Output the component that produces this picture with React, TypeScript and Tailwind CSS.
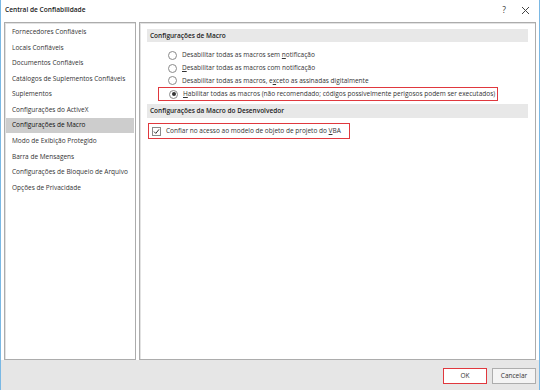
import React from "react";

const items = [
  "Fornecedores Confiáveis",
  "Locais Confiáveis",
  "Documentos Confiáveis",
  "Catálogos de Suplementos Confiáveis",
  "Suplementos",
  "Configurações do ActiveX",
  "Configurações de Macro",
  "Modo de Exibição Protegido",
  "Barra de Mensagens",
  "Configurações de Bloqueio de Arquivo",
  "Opções de Privacidade",
];

function Radio({ checked }: { checked?: boolean }) {
  return (
    <span className="w-[9px] h-[9px] rounded-full border border-[#8a8a8a] bg-white flex items-center justify-center shrink-0">
      {checked && <span className="w-[4px] h-[4px] rounded-full bg-[#333]" />}
    </span>
  );
}

export default function App() {
  return (
    <div
      className="w-[540px] h-[390px] bg-white border-l border-r border-[#7ab8e4] flex flex-col text-[#333] text-[6.5px] overflow-hidden whitespace-nowrap"
      style={{ fontFamily: '"Open Sans", "Noto Sans", sans-serif' }}
    >
      <div className="h-[20px] flex items-center justify-between pl-[4px] pr-[9px]">
        <span className="text-[6.6px] font-semibold text-[#222]">Central de Confiabilidade</span>
        <div className="flex items-center gap-[15px] text-[#333]">
          <span className="text-[8.5px]">?</span>
          <svg width="9" height="9" viewBox="0 0 9 9">
            <path d="M1 1L8 8M8 1L1 8" stroke="#444" strokeWidth="1" />
          </svg>
        </div>
      </div>
      <div className="flex gap-[3px] px-[3px] pt-[2px] h-[340px]">
        <div className="w-[132px] border border-[#acacac] shadow-[inset_1px_1px_0_#e2e2e2] bg-white py-[1px] px-[1px]">
          {items.map((t, i) => (
            <div
              key={t}
              className={
                "h-[15.6px] flex items-center pl-[6px] " +
                (i === 6 ? "bg-[#cdcdcd] text-[#111] font-medium" : "")
              }
            >
              {t}
            </div>
          ))}
        </div>
        <div className="flex-1 border border-[#acacac] shadow-[inset_1px_1px_0_#e2e2e2] bg-white pt-[6px] pl-[7px] pr-[7px]">
          <div className="h-[13px] bg-[#e8e8e8] flex items-center pl-[3px] font-semibold text-[#222]">
            Configurações de Macro
          </div>
          <div className="pl-[17px] pt-[7px] flex flex-col">
            <div className="h-[12.7px] flex items-center gap-[5px] pl-[4px]">
              <Radio />
              <span>
                Desabilitar todas as macros sem <span className="underline">n</span>otificação
              </span>
            </div>
            <div className="h-[12.7px] flex items-center gap-[5px] pl-[4px]">
              <Radio />
              <span>
                <span className="underline">D</span>esabilitar todas as macros com notificação
              </span>
            </div>
            <div className="h-[12.7px] flex items-center gap-[5px] pl-[4px]">
              <Radio />
              <span>
                Desabilitar todas as macros, e<span className="underline">x</span>ceto as assinadas digitalmente
              </span>
            </div>
            <div className="h-[14px] w-[340px] ml-[-6px] flex items-center gap-[5px] pl-[10px] border border-[#e0383e]">
              <Radio checked />
              <span>
                <span className="underline">H</span>abilitar todas as macros (não recomendado; códigos possivelmente perigosos podem ser executados)
              </span>
            </div>
          </div>
          <div className="mt-[3px] h-[14px] bg-[#e8e8e8] flex items-center pl-[3px] font-semibold text-[#222]">
            Configurações da Macro do Desenvolvedor
          </div>
          <div className="mt-[5px] ml-[1px] w-[202px] h-[16px] border border-[#e0383e] flex items-center pl-[3px] gap-[5px]">
            <span className="w-[9px] h-[9px] border border-[#8a8a8a] bg-white flex items-center justify-center">
              <svg width="7" height="7" viewBox="0 0 7 7">
                <path d="M1 3.6L2.8 5.4L6 1.4" stroke="#333" strokeWidth="1" fill="none" />
              </svg>
            </span>
            <span>
              Confiar no acesso ao modelo de objeto de projeto do <span className="underline">V</span>BA
            </span>
          </div>
        </div>
      </div>
      <div className="flex-1 bg-[#e6e6e6] flex justify-end items-start pt-[8px] pr-[3px] gap-[5px]">
        <button className="w-[44px] h-[16px] bg-white border border-[#e0383e] flex items-center justify-center text-[6.5px]">
          OK
        </button>
        <button className="w-[44px] h-[16px] bg-[#f4f4f4] border border-[#adadad] flex items-center justify-center text-[6.5px]">
          Cancelar
        </button>
      </div>
    </div>
  );
}
